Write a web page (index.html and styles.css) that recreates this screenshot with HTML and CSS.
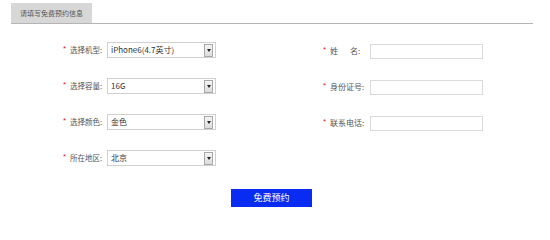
FILE: index.html
```html
<!DOCTYPE html>
<html lang="zh-CN">
<head>
<meta charset="utf-8">
<title>预约</title>
<link rel="stylesheet" href="styles.css">
</head>
<body>
<div class="page">
  <div class="tabs">
    <div class="tab">请填写免费预约信息</div>
    <div class="tabline"></div>
  </div>
  <div class="form">
    <div class="col">
      <div class="field"><span class="star">*</span><span class="label">选择机型:</span><div class="select"><span class="val">iPhone6(4.7英寸)</span><span class="arrow"></span></div></div>
      <div class="field"><span class="star">*</span><span class="label">选择容量:</span><div class="select"><span class="val">16G</span><span class="arrow"></span></div></div>
      <div class="field"><span class="star">*</span><span class="label">选择颜色:</span><div class="select"><span class="val">金色</span><span class="arrow"></span></div></div>
      <div class="field"><span class="star">*</span><span class="label">所在地区:</span><div class="select"><span class="val">北京</span><span class="arrow"></span></div></div>
    </div>
    <div class="col right">
      <div class="field"><span class="star">*</span><span class="label">姓<span class="sp"></span>名:</span><div class="input"></div></div>
      <div class="field"><span class="star">*</span><span class="label">身份证号:</span><div class="input"></div></div>
      <div class="field"><span class="star">*</span><span class="label">联系电话:</span><div class="input"></div></div>
    </div>
  </div>
  <div class="actions"><button class="submit" type="button">免费预约</button></div>
</div>
</body>
</html>
```

FILE: styles.css
```css
html, body {
  margin: 0;
  background: #fff;
}
body {
  font-family: "Noto Sans CJK SC", "Liberation Sans", sans-serif;
}
.page {
  width: 550px;
  height: 208px;
  overflow: hidden;
}
.tabs {
  display: flex;
  align-items: flex-end;
  padding: 3px 17px 0 11px;
}
.tab {
  width: 81px;
  height: 20px;
  background: #d7d7d7;
  color: #555;
  font-size: 7px;
  line-height: 1;
  display: flex;
  align-items: center;
  justify-content: center;
  border-bottom: 1px solid #b5b5b5;
}
.tabline {
  flex: 1;
  border-bottom: 1px solid #b5b5b5;
}
.form {
  display: flex;
  padding-left: 63px;
  margin-top: 18px;
}
.col {
  display: flex;
  flex-direction: column;
  gap: 20px;
  width: 260px;
  flex: none;
}
.right {
  width: 170px;
  padding-top: 1px;
}
.field {
  display: flex;
  align-items: center;
  height: 16px;
}
.star {
  width: 7px;
  color: #d22;
  font-size: 8px;
  line-height: 1;
  font-family: "Liberation Sans", sans-serif;
  margin-top: -3px;
}
.label {
  width: 37px;
  font-size: 7.5px;
  line-height: 1;
  color: #555;
  white-space: nowrap;
  display: flex;
}
.right .label {
  width: 40px;
  font-size: 8px;
}
.sp {
  display: inline-block;
  width: 12px;
}
.select {
  width: 109px;
  height: 16px;
  box-sizing: border-box;
  border: 1px solid #d0d0d0;
  display: flex;
  align-items: center;
  justify-content: space-between;
  padding: 0 2px 0 3px;
  font-size: 8px;
  line-height: 1;
  color: #333;
}
.arrow {
  width: 9px;
  height: 13px;
  box-sizing: border-box;
  border: 1px solid #a8a8a8;
  background: linear-gradient(#f4f4f4, #dcdcdc);
  display: flex;
  align-items: center;
  justify-content: center;
}
.arrow::after {
  content: "";
  width: 0;
  height: 0;
  border-left: 2px solid transparent;
  border-right: 2px solid transparent;
  border-top: 3px solid #222;
}
.input {
  width: 113px;
  height: 15px;
  box-sizing: border-box;
  border: 1px solid #dadada;
}
.actions {
  padding-left: 231px;
  margin-top: 16px;
}
.submit {
  width: 81px;
  height: 18px;
  padding: 0;
  border: 0;
  background: #0a2cf2;
  color: #fff;
  font-family: "Noto Sans CJK SC", sans-serif;
  font-size: 9px;
  line-height: 1;
}
```
